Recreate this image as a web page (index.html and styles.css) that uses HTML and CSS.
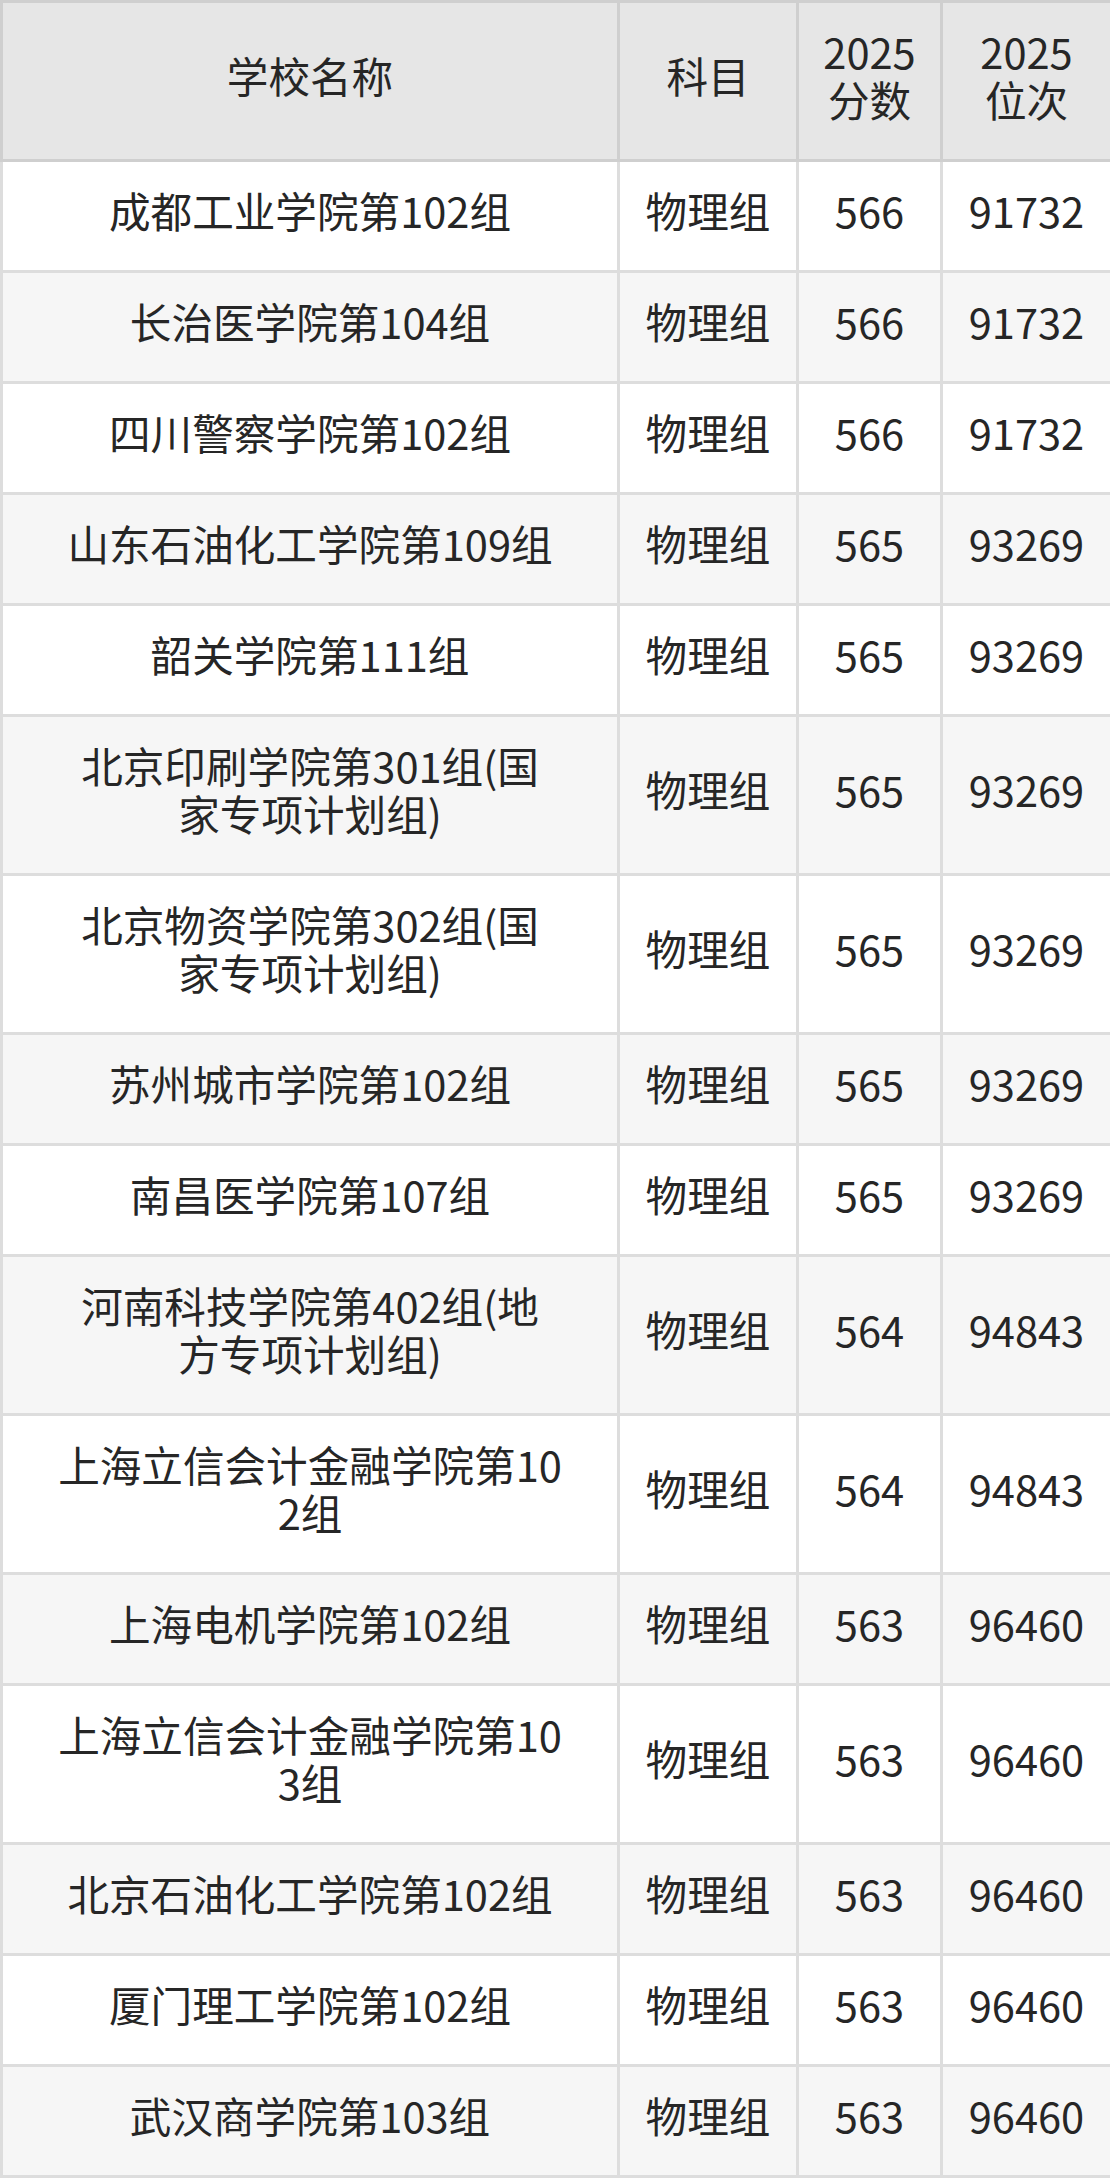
FILE: index.html
```html
<!DOCTYPE html>
<html lang="zh-CN">
<head>
<meta charset="utf-8">
<title>分数位次</title>
<link rel="stylesheet" href="styles.css">
</head>
<body>
<table class="score-table">
  <colgroup>
    <col class="c-name">
    <col class="c-subj">
    <col class="c-score">
    <col class="c-rank">
  </colgroup>
  <thead>
    <tr>
      <th>学校名称</th>
      <th>科目</th>
      <th>2025<br>分数</th>
      <th>2025<br>位次</th>
    </tr>
  </thead>
  <tbody>
    <tr><td>成都工业学院第102组</td><td>物理组</td><td>566</td><td>91732</td></tr>
    <tr><td>长治医学院第104组</td><td>物理组</td><td>566</td><td>91732</td></tr>
    <tr><td>四川警察学院第102组</td><td>物理组</td><td>566</td><td>91732</td></tr>
    <tr><td>山东石油化工学院第109组</td><td>物理组</td><td>565</td><td>93269</td></tr>
    <tr><td>韶关学院第111组</td><td>物理组</td><td>565</td><td>93269</td></tr>
    <tr><td>北京印刷学院第301组(国<br>家专项计划组)</td><td>物理组</td><td>565</td><td>93269</td></tr>
    <tr><td>北京物资学院第302组(国<br>家专项计划组)</td><td>物理组</td><td>565</td><td>93269</td></tr>
    <tr><td>苏州城市学院第102组</td><td>物理组</td><td>565</td><td>93269</td></tr>
    <tr><td>南昌医学院第107组</td><td>物理组</td><td>565</td><td>93269</td></tr>
    <tr><td>河南科技学院第402组(地<br>方专项计划组)</td><td>物理组</td><td>564</td><td>94843</td></tr>
    <tr><td>上海立信会计金融学院第10<br>2组</td><td>物理组</td><td>564</td><td>94843</td></tr>
    <tr><td>上海电机学院第102组</td><td>物理组</td><td>563</td><td>96460</td></tr>
    <tr><td>上海立信会计金融学院第10<br>3组</td><td>物理组</td><td>563</td><td>96460</td></tr>
    <tr><td>北京石油化工学院第102组</td><td>物理组</td><td>563</td><td>96460</td></tr>
    <tr><td>厦门理工学院第102组</td><td>物理组</td><td>563</td><td>96460</td></tr>
    <tr><td>武汉商学院第103组</td><td>物理组</td><td>563</td><td>96460</td></tr>
  </tbody>
</table>
</body>
</html>
```

FILE: styles.css
```css
html, body {
  margin: 0;
  padding: 0;
  background: #ffffff;
}

body {
  font-family: "Noto Sans CJK SC", "Noto Sans", sans-serif;
  color: #262626;
}

.score-table {
  width: 1110px;
  border-collapse: collapse;
  table-layout: fixed;
  font-size: 41.6px;
  line-height: 48px;
}

.c-name { width: 617px; }
.c-subj { width: 179px; }
.c-score { width: 144px; }
.c-rank { width: 170px; }

.score-table th,
.score-table td {
  padding: 24px 0 36px;
  text-align: center;
  vertical-align: middle;
  white-space: nowrap;
}

.score-table th {
  font-weight: normal;
  background: #e6e6e6;
  border: 3px solid #cfcfcf;
}

.score-table td {
  border: 3px solid #dddddd;
}

.score-table tbody tr:nth-child(odd) td {
  background: #ffffff;
}

.score-table tbody tr:nth-child(even) td {
  background: #f6f6f6;
}
```
